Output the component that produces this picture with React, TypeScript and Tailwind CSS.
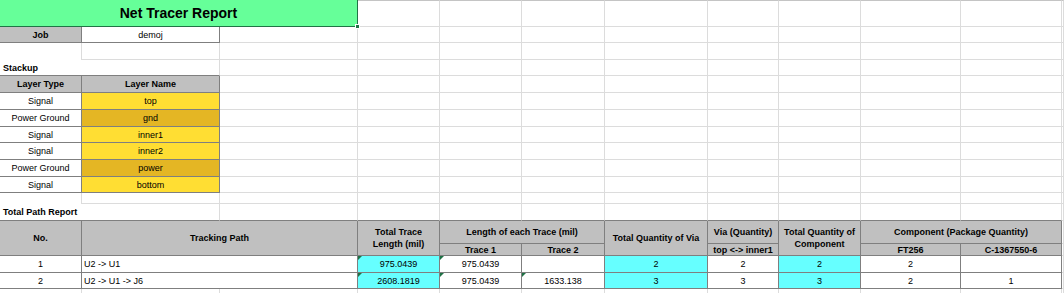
import React from 'react';

const COL = ['', 'col-start-1', 'col-start-2', 'col-start-3', 'col-start-4', 'col-start-5', 'col-start-6', 'col-start-7', 'col-start-8', 'col-start-9', 'col-start-10', 'col-start-11', 'col-start-12'];
const ROW = ['', 'row-start-1', 'row-start-2', 'row-start-3', 'row-start-4', 'row-start-5', 'row-start-6', 'row-start-7', 'row-start-8', 'row-start-9', 'row-start-10', 'row-start-11', 'row-start-12', 'row-start-13', 'row-start-14', 'row-start-15', 'row-start-16', 'row-start-17', 'row-start-18'];
const CSPAN = ['', 'col-span-1', 'col-span-2', 'col-span-3'];
const RSPAN = ['', 'row-span-1', 'row-span-2'];

const GRAY = 'bg-[#c0c0c0]';
const YEL = 'bg-[#ffde33]';
const GOLD = 'bg-[#e4b624]';
const CYAN = 'bg-[#66ffff]';
const WHITE = 'bg-white';

type Cell = {
  r: number;
  c: number;
  rs?: number;
  cs?: number;
  text?: React.ReactNode;
  fill?: string;
  bold?: boolean;
  left?: boolean;
  tri?: boolean;
};

const layers: [string, string, string][] = [
  ['Signal', 'top', YEL],
  ['Power Ground', 'gnd', GOLD],
  ['Signal', 'inner1', YEL],
  ['Signal', 'inner2', YEL],
  ['Power Ground', 'power', GOLD],
  ['Signal', 'bottom', YEL],
];

const cells: Cell[] = [
  { r: 2, c: 1, text: 'Job', fill: GRAY, bold: true },
  { r: 2, c: 2, text: 'demoj', fill: WHITE },
  { r: 5, c: 1, text: 'Layer Type', fill: GRAY, bold: true },
  { r: 5, c: 2, text: 'Layer Name', fill: GRAY, bold: true },
  ...layers.flatMap(([type, name, fill], i) => [
    { r: 6 + i, c: 1, text: type, fill: WHITE },
    { r: 6 + i, c: 2, text: name, fill },
  ]),
  // path report header
  { r: 14, c: 1, rs: 2, text: 'No.', fill: GRAY, bold: true },
  { r: 14, c: 2, rs: 2, cs: 2, text: 'Tracking Path', fill: GRAY, bold: true },
  { r: 14, c: 4, rs: 2, text: <>Total Trace<br />Length (mil)</>, fill: GRAY, bold: true },
  { r: 14, c: 5, cs: 2, text: 'Length of each Trace (mil)', fill: GRAY, bold: true },
  { r: 15, c: 5, text: 'Trace 1', fill: GRAY, bold: true },
  { r: 15, c: 6, text: 'Trace 2', fill: GRAY, bold: true },
  { r: 14, c: 7, rs: 2, text: 'Total Quantity of Via', fill: GRAY, bold: true },
  { r: 14, c: 8, text: 'Via (Quantity)', fill: GRAY, bold: true },
  { r: 15, c: 8, text: 'top <-> inner1', fill: GRAY, bold: true },
  { r: 14, c: 9, rs: 2, text: <>Total Quantity of<br />Component</>, fill: GRAY, bold: true },
  { r: 14, c: 10, cs: 2, text: 'Component (Package Quantity)', fill: GRAY, bold: true },
  { r: 15, c: 10, text: 'FT256', fill: GRAY, bold: true },
  { r: 15, c: 11, text: 'C-1367550-6', fill: GRAY, bold: true },
  // path rows
  { r: 16, c: 1, text: '1', fill: WHITE },
  { r: 16, c: 2, cs: 2, text: 'U2 -> U1', fill: WHITE, left: true },
  { r: 16, c: 4, text: '975.0439', fill: CYAN, tri: true },
  { r: 16, c: 5, text: '975.0439', fill: WHITE, tri: true },
  { r: 16, c: 6, text: '', fill: WHITE },
  { r: 16, c: 7, text: '2', fill: CYAN },
  { r: 16, c: 8, text: '2', fill: WHITE },
  { r: 16, c: 9, text: '2', fill: CYAN },
  { r: 16, c: 10, text: '2', fill: WHITE },
  { r: 16, c: 11, text: '', fill: WHITE },
  { r: 17, c: 1, text: '2', fill: WHITE },
  { r: 17, c: 2, cs: 2, text: 'U2 -> U1 -> J6', fill: WHITE, left: true },
  { r: 17, c: 4, text: '2608.1819', fill: CYAN, tri: true },
  { r: 17, c: 5, text: '975.0439', fill: WHITE, tri: true },
  { r: 17, c: 6, text: '1633.138', fill: WHITE, tri: true },
  { r: 17, c: 7, text: '3', fill: CYAN },
  { r: 17, c: 8, text: '3', fill: WHITE },
  { r: 17, c: 9, text: '3', fill: CYAN },
  { r: 17, c: 10, text: '2', fill: WHITE },
  { r: 17, c: 11, text: '1', fill: WHITE },
];

const NROWS = 18;
const NCOLS = 12;

function buildOccupancy() {
  const occ: string[][] = Array.from({ length: NROWS + 2 }, () => Array(NCOLS + 2).fill(''));
  for (const cell of cells) {
    for (let r = cell.r; r < cell.r + (cell.rs ?? 1); r++)
      for (let c = cell.c; c < cell.c + (cell.cs ?? 1); c++) occ[r][c] = 'table';
  }
  // title + section labels are drawn separately
  occ[1][1] = occ[1][2] = occ[1][3] = 'special';
  occ[4][1] = 'special';
  occ[13][1] = 'special';
  return occ;
}

function TableCell({ cell }: { cell: Cell }) {
  const { r, c, rs = 1, cs = 1 } = cell;
  return (
    <div
      className={`${ROW[r]} ${COL[c]} ${RSPAN[rs]} ${CSPAN[cs]} relative flex items-center border-r border-b border-[#7f7f7f] ${cell.fill} ${cell.bold ? 'font-bold' : ''} ${cell.left ? 'justify-start pl-[2px]' : 'justify-center text-center'} whitespace-nowrap`}
    >
      {cell.tri && (
        <span className="absolute left-0 top-0 h-0 w-0 border-t-[4px] border-r-[4px] border-t-[#1e7145] border-r-transparent" />
      )}
      {cell.text}
    </div>
  );
}

export default function App() {
  const occ = buildOccupancy();
  const empties: React.ReactNode[] = [];

  for (let r = 1; r <= NROWS; r++) {
    for (let c = 1; c <= NCOLS; c++) {
      if (occ[r][c]) continue;
      let cls = 'border-r border-b border-r-[#dcdcdc] border-b-[#dcdcdc]';
      if (occ[r + 1]?.[c] === 'table') cls = 'border-r border-b border-r-[#dcdcdc] border-b-[#7f7f7f]';
      if (c === 1 && (r === 3 || r === 12)) cls = 'border-r border-r-[#dcdcdc]';
      if (r === 1) cls += ' border-t border-t-[#c4c4c4]';
      empties.push(<div key={`${r}-${c}`} className={`${ROW[r]} ${COL[c]} ${cls}`} />);
    }
  }

  return (
    <div className="h-[293px] w-[1064px] overflow-hidden bg-white font-['Liberation_Sans',Arial,sans-serif] text-[9px] leading-[12px] text-black">
      <div className="grid w-[1064px] grid-cols-[82px_138px_138px_82px_82px_83px_103px_71px_82px_100px_101px_1fr] grid-rows-[27px_16px_17px_16px_17px_17px_17px_16px_17px_17px_16px_11px_17px_23px_12px_17px_16px_17px]">
        {empties}

        <div className="relative col-span-3 col-start-1 row-start-1 flex items-center justify-center border-r border-b border-[#217346] bg-[#66ff99] text-[14px] font-bold">
          Net Tracer Report
          <span className="absolute -bottom-[3px] -right-[3px] z-10 h-[5px] w-[5px] border border-white bg-[#217346]" />
        </div>

        <div className="col-start-1 row-start-4 flex items-center whitespace-nowrap border-b border-[#7f7f7f] pl-[3px] font-bold">
          Stackup
        </div>
        <div className="col-start-1 row-start-13 flex items-center whitespace-nowrap border-b border-[#7f7f7f] pl-[3px] font-bold">
          Total Path Report
        </div>

        {cells.map((cell) => (
          <TableCell key={`${cell.r}-${cell.c}`} cell={cell} />
        ))}
      </div>
    </div>
  );
}
